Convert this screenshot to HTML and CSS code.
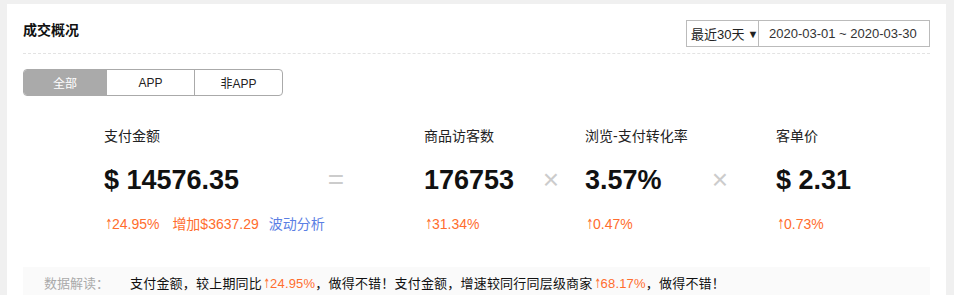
FILE: index.html
```html
<!DOCTYPE html>
<html>
  <head>
    <meta charset="utf-8">
    <link rel="stylesheet" href="styles.css">
  </head>
  <body>
    <div class="card">
      <div class="header">
        <div class="title">成交概况</div>
        <div class="date-picker">
          <div class="range-select">最近30天 <span class="caret">▼</span></div>
          <div class="range-text">2020-03-01 ~ 2020-03-30</div>
        </div>
      </div>

      <div class="tabs">
        <div class="tab active">全部</div>
        <div class="tab">APP</div>
        <div class="tab">非APP</div>
      </div>

      <div class="metrics">
        <div class="metric m1">
          <div class="label">支付金额</div>
          <div class="value">$ 14576.35</div>
          <div class="change">
            <span class="up"><span class="arrow">↑</span>24.95%</span>
            <span class="up extra">增加$3637.29</span>
            <span class="link">波动分析</span>
          </div>
        </div>
        <div class="op op1">=</div>
        <div class="metric m2">
          <div class="label">商品访客数</div>
          <div class="value">176753</div>
          <div class="change"><span class="up"><span class="arrow">↑</span>31.34%</span></div>
        </div>
        <div class="op op2">×</div>
        <div class="metric m3">
          <div class="label">浏览-支付转化率</div>
          <div class="value">3.57%</div>
          <div class="change"><span class="up"><span class="arrow">↑</span>0.47%</span></div>
        </div>
        <div class="op op3">×</div>
        <div class="metric m4">
          <div class="label">客单价</div>
          <div class="value">$ 2.31</div>
          <div class="change"><span class="up"><span class="arrow">↑</span>0.73%</span></div>
        </div>
      </div>

      <div class="insight">
        <span class="insight-label">数据解读：</span>
        <span class="insight-text">支付金额，较上期同比<span class="up"><span class="arrow">↑</span>24.95%</span>，做得不错！支付金额，增速较同行同层级商家<span class="up"><span class="arrow">↑</span>68.17%</span>，做得不错！</span>
      </div>
    </div>
  </body>
</html>
```

FILE: styles.css
```css
body {
  margin: 0;
  background-color: #f0f0f0;
  font-family: "Liberation Sans", "Noto Sans CJK SC", sans-serif;
  color: #222;
  font-size: 13px;
}

.card {
  margin: 4px 8px 0 7px;
  background-color: #fff;
  padding: 0 16px 20px 16px;
  height: 320px;
  box-sizing: border-box;
}

.header {
  display: flex;
  justify-content: space-between;
  align-items: flex-start;
  padding: 16px 0 6px 0;
  border-bottom: 1px dashed #e3e3e3;
}

.title {
  font-size: 14px;
  font-weight: bold;
  line-height: 20px;
  color: #111;
}

.date-picker {
  display: flex;
  height: 27px;
  border: 1px solid #bbb;
  box-sizing: border-box;
}

.range-select {
  width: 72px;
  border-right: 1px solid #bbb;
  display: flex;
  align-items: center;
  padding-left: 4px;
  box-sizing: border-box;
  white-space: nowrap;
}

.caret {
  font-size: 11px;
  margin-left: 3px;
}

.range-text {
  width: 170px;
  display: flex;
  align-items: center;
  padding-left: 10px;
  box-sizing: border-box;
  color: #333;
}

.tabs {
  display: flex;
  width: 260px;
  height: 27px;
  margin-top: 15px;
  border: 1px solid #aaa;
  border-radius: 4px;
  overflow: hidden;
  box-sizing: border-box;
  font-size: 12px;
}

.tab {
  display: flex;
  align-items: center;
  justify-content: center;
  width: 89px;
  border-left: 1px solid #aaa;
  color: #222;
}

.tab:first-child {
  width: 84px;
  border-left: none;
}

.tab.active {
  background-color: #aaa;
  color: #fff;
}

.metrics {
  display: flex;
  align-items: flex-start;
  padding-left: 81px;
  margin-top: 30px;
}

.label {
  font-size: 14px;
  line-height: 20px;
  color: #222;
  white-space: nowrap;
}

.value {
  font-size: 27px;
  font-weight: bold;
  line-height: 34px;
  margin-top: 17px;
  color: #111;
  white-space: nowrap;
}

.change {
  margin-top: 18px;
  font-size: 14px;
  line-height: 18px;
  white-space: nowrap;
}

.up {
  color: #ff6d2e;
}

.arrow {
  font-family: "DejaVu Sans", sans-serif;
  display: inline-block;
  transform: scaleX(0.6);
  width: 7px;
  text-align: center;
  margin-right: 1px;
}

.extra {
  margin-left: 9px;
}

.link {
  color: #5b7fe4;
  margin-left: 6px;
}

.m1 { width: 220px; }
.m2 { width: 115px; }
.m3 { width: 123px; }

.op {
  width: 24px;
  text-align: center;
  margin-top: 37px;
  font-size: 28px;
  line-height: 34px;
  color: #ccc;
}

.op1 { margin-right: 76px; }
.op2 { margin-right: 22px; }
.op3 { margin-right: 44px; }

.insight {
  margin-top: 34px;
  background-color: #fafafa;
  padding: 8px 0 8px 21px;
  line-height: 18px;
  display: flex;
}

.insight-label {
  width: 86px;
  color: #aaa;
  flex-shrink: 0;
}

.insight-text {
  color: #111;
  letter-spacing: 0.2px;
}
```
